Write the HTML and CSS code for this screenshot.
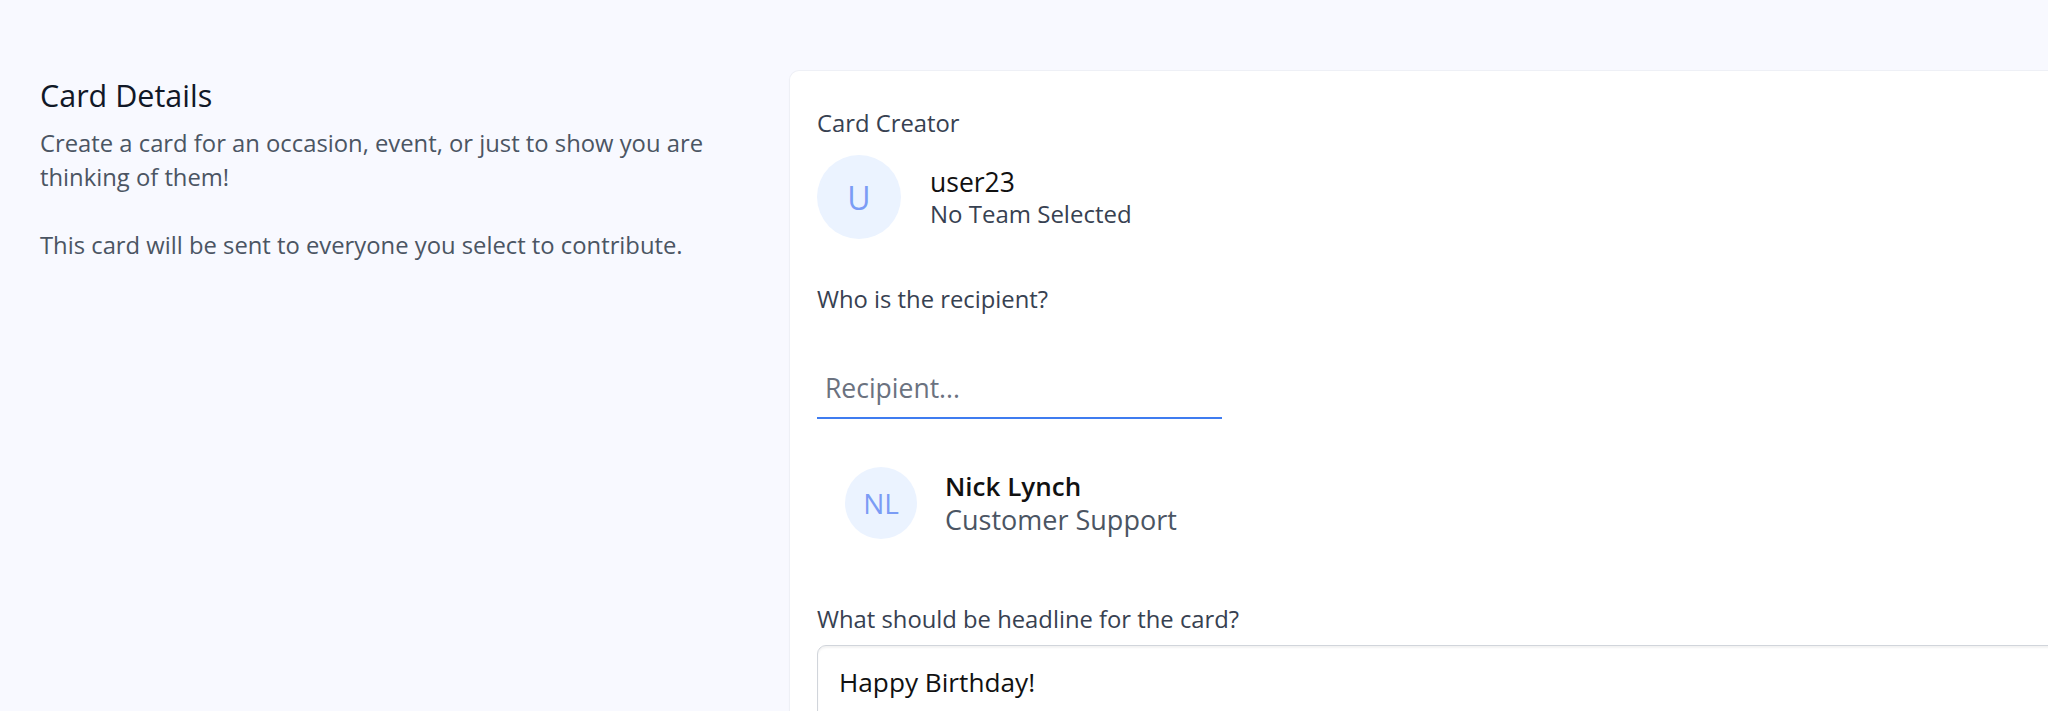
FILE: index.html
```html
<!DOCTYPE html>
<html lang="en">
<head>
<meta charset="utf-8">
<title>Card Details</title>
<link rel="stylesheet" href="styles.css">
</head>
<body>
<div class="page">
  <aside class="intro">
    <h2 class="intro-title">Card Details</h2>
    <p class="intro-text">Create a card for an occasion, event, or just to show you are thinking of them!</p>
    <p class="intro-text">This card will be sent to everyone you select to contribute.</p>
  </aside>
  <main class="card">
    <div class="label">Card Creator</div>
    <div class="creator">
      <div class="avatar avatar-lg">U</div>
      <div class="creator-info">
        <div class="creator-name">user23</div>
        <div class="creator-team">No Team Selected</div>
      </div>
    </div>
    <div class="label label-recipient">Who is the recipient?</div>
    <div class="recipient-field">
      <input class="recipient-input" type="text" placeholder="Recipient...">
    </div>
    <div class="person">
      <div class="avatar avatar-md">NL</div>
      <div class="person-info">
        <div class="person-name">Nick Lynch</div>
        <div class="person-role">Customer Support</div>
      </div>
    </div>
    <div class="label label-headline">What should be headline for the card?</div>
    <div class="headline-box">Happy Birthday!</div>
  </main>
</div>
</body>
</html>
```

FILE: styles.css
```css
html, body {
  margin: 0;
  padding: 0;
  overflow: hidden;
}
body {
  background: #f8f9ff;
  font-family: "Open Sans", "Noto Sans", sans-serif;
  color: #4b5563;
}
.page {
  display: flex;
  align-items: flex-start;
  padding: 71px 0 0 40px;
  height: 640px;
}
.intro {
  width: 750px;
  flex: none;
  padding-top: 7px;
}
.intro-title {
  margin: 0;
  font-size: 30.5px;
  font-weight: 400;
  line-height: 34px;
  color: #111827;
}
.intro-text {
  margin: 14px 0 0;
  font-size: 23.8px;
  line-height: 34px;
  width: 720px;
}
.intro-text + .intro-text {
  margin-top: 34px;
}
.card {
  flex: 1;
  margin-right: -80px;
  background: #fff;
  border-radius: 9px;
  box-shadow: 0 0 0 1px #eef0f6, 0 1px 3px rgba(0,0,0,0.04);
  padding: 38px 27px 0;
  min-height: 700px;
}
.label {
  font-size: 23.8px;
  line-height: 28px;
  color: #374151;
}
.creator {
  display: flex;
  align-items: center;
  gap: 29px;
  margin-top: 18px;
}
.avatar {
  flex: none;
  border-radius: 50%;
  background: #ebf3ff;
  color: #7b9cf5;
  display: flex;
  align-items: center;
  justify-content: center;
}
.avatar-lg {
  width: 84px;
  height: 84px;
  font-size: 32px;
}
.avatar-md {
  width: 72px;
  height: 72px;
  font-size: 28px;
}
.creator-name {
  font-size: 26.5px;
  line-height: 33px;
  color: #111;
}
.creator-team {
  font-size: 24px;
  line-height: 30px;
  color: #374151;
}
.label-recipient {
  margin-top: 46px;
}
.recipient-field {
  margin-top: 47px;
  width: 405px;
}
.recipient-input {
  box-sizing: border-box;
  width: 100%;
  border: none;
  border-bottom: 2px solid #3f7cf0;
  outline: none;
  background: transparent;
  font-family: inherit;
  font-size: 26.5px;
  line-height: 32px;
  padding: 12px 8px 13px;
  color: #111;
}
.recipient-input::placeholder {
  color: #6b7280;
}
.person {
  display: flex;
  align-items: center;
  gap: 28px;
  margin: 48px 0 0 28px;
}
.person-name {
  font-size: 26px;
  line-height: 34px;
  font-weight: 600;
  color: #111;
}
.person-role {
  font-size: 27px;
  line-height: 34px;
  color: #4b5563;
}
.label-headline {
  margin-top: 66px;
}
.headline-box {
  margin-top: 12px;
  border: 1px solid #d1d5db;
  border-radius: 9px;
  box-shadow: inset 0 2px 2px rgba(0,0,0,0.05);
  padding: 20px 21px;
  font-size: 26.2px;
  line-height: 32px;
  color: #111;
  height: 80px;
}
```
